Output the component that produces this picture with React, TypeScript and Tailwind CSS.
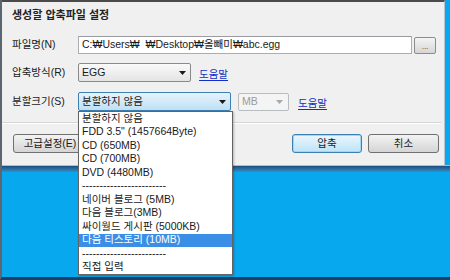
const font = "font-['Liberation_Sans','Noto_Sans_CJK_KR',sans-serif]";

const items = [
  '분할하지 않음',
  'FDD 3.5" (1457664Byte)',
  'CD (650MB)',
  'CD (700MB)',
  'DVD (4480MB)',
  '------------------------',
  '네이버 블로그 (5MB)',
  '다음 블로그(3MB)',
  '싸이월드 게시판 (5000KB)',
  '다음 티스토리 (10MB)',
  '------------------------',
  '직접 입력',
];

function Arrow({ color = '#1a1a1a' }: { color?: string }) {
  return (
    <svg width="7" height="4" viewBox="0 0 7 4">
      <path d="M0 0h7L3.5 4z" fill={color} />
    </svg>
  );
}

function Label({ children }: { children: React.ReactNode }) {
  return <div className="w-[66px] shrink-0 text-[10.5px] text-[#1a1a1a]">{children}</div>;
}

function HelpLink() {
  return <span className="text-[10.5px] text-[#1030c8] underline underline-offset-2">도움말</span>;
}

export default function App() {
  return (
    <div className={`relative flex h-[280px] w-[450px] flex-col overflow-hidden border-l-[2px] border-b-[3px] border-l-[#5d6670] border-b-[#1a4068] bg-[#07a8ee] ${font}`}>
      {/* dialog */}
      <div className="flex h-[165px] w-[443px] shrink-0 flex-col border-t-[2px] border-r border-t-[#4b4b4b] border-r-[#b8c4cf] bg-[#f0f0f0] pl-[10px]">
        <div className="mt-[6px] h-[14px] text-[11px] font-bold leading-[14px] text-[#222]">생성할 압축파일 설정</div>

        {/* file name */}
        <div className="mt-[14px] flex h-[18px] items-center">
          <Label>파일명(N)</Label>
          <div className="flex h-[18px] w-[334px] items-center border border-[#abadb3] border-t-[#9a9ca2] bg-white pl-[3px] text-[10.5px] text-[#1a1a1a]">
            C:₩Users₩ &nbsp;₩Desktop₩올빼미₩abc.egg
          </div>
          <div className="ml-[2px] flex h-[17px] w-[22px] items-end justify-center rounded-[2px] border border-[#8c8c8c] bg-gradient-to-b from-[#f4f4f4] to-[#d6d6d6] pb-[2px] text-[8px] leading-[8px] text-[#333]">
            ...
          </div>
        </div>

        {/* method */}
        <div className="mt-[9px] flex h-[19px] items-center">
          <Label>압축방식(R)</Label>
          <div className="flex h-[19px] w-[113px] items-center justify-between rounded-[2px] border border-[#8a8a8a] bg-gradient-to-b from-[#fafafa] to-[#e4e4e4] pl-[3px] pr-[4px] text-[10.5px] text-[#1a1a1a]">
            EGG
            <Arrow />
          </div>
          <div className="ml-[8px]">
            <HelpLink />
          </div>
        </div>

        {/* split size */}
        <div className="mt-[10px] flex h-[19px] items-center">
          <Label>분할크기(S)</Label>
          <div className="flex h-[19px] w-[153px] items-center justify-between rounded-[2px] border border-[#3c7fb1] bg-gradient-to-b from-[#e6f3fb] to-[#bfe0f5] pl-[3px] pr-[4px] text-[10.5px] text-[#1a1a1a]">
            분할하지 않음
            <Arrow />
          </div>
          <div className="ml-[7px] flex h-[18px] w-[51px] items-center justify-between rounded-[2px] border border-[#b8bdc2] bg-[#f4f4f4] pl-[3px] pr-[5px] text-[10.5px] text-[#9a9a9a]">
            MB
            <Arrow color="#a8a8a8" />
          </div>
          <div className="ml-[9px]">
            <HelpLink />
          </div>
        </div>

        {/* separator */}
        <div className="-ml-[10px] mr-[3px] mt-[11px] h-[2px] border-t border-b border-t-[#d5d5d5] border-b-white" />

        {/* buttons */}
        <div className="mt-[10px] flex h-[19px] items-center pr-[5px]">
          <div className="ml-[1px] flex h-[19px] w-[74px] items-center justify-center rounded-[3px] border border-[#707070] bg-gradient-to-b from-[#f3f3f3] to-[#d5d5d5] text-[10.5px] text-[#1a1a1a]">
            고급설정(E)
          </div>
          <div className="ml-auto flex h-[19px] w-[70px] items-center justify-center rounded-[3px] border border-[#3c7fb1] bg-gradient-to-b from-[#ebf6fd] to-[#bde3f8] text-[10.5px] text-[#1a1a1a] shadow-[inset_0_0_0_1px_#9fd8f6]">
            압축
          </div>
          <div className="ml-[6px] flex h-[19px] w-[71px] items-center justify-center rounded-[3px] border border-[#707070] bg-gradient-to-b from-[#f3f3f3] to-[#d5d5d5] text-[10.5px] text-[#1a1a1a]">
            취소
          </div>
        </div>
      </div>

      {/* frame band */}
      <div className="h-[7px] w-full shrink-0 border-t border-t-[#9cc4e2] bg-gradient-to-b from-[#1c4f7e] to-[#3a8dc8]" />
      <div className="flex-1 bg-[#07a8ee]" />

      {/* open dropdown list */}
      <div className="absolute left-[76px] top-[111px] w-[155px] border border-[#646464] bg-white shadow-[1px_1px_2px_rgba(0,0,0,0.25)]">
        {items.map((t, i) => (
          <div
            key={i}
            className={`flex h-[13.5px] items-center whitespace-nowrap pl-[3px] text-[10.5px] ${
              i === 9 ? 'bg-[#3b8ee6] text-white' : 'text-[#1a1a1a]'
            }`}
          >
            {t}
          </div>
        ))}
      </div>
    </div>
  );
}
